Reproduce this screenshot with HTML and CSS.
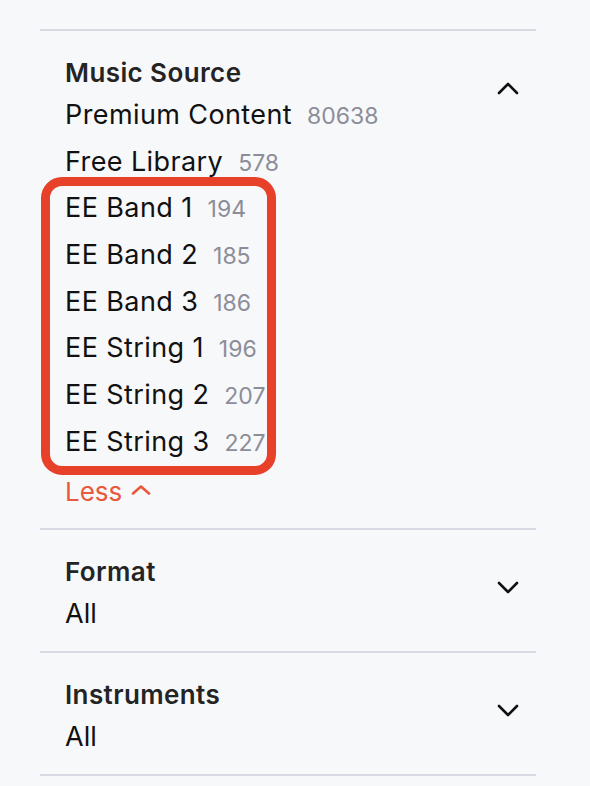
FILE: index.html
```html
<!DOCTYPE html>
<html lang="en">
<head>
<meta charset="utf-8">
<title>Filters</title>
<link rel="stylesheet" href="styles.css">
</head>
<body>
<div class="filters">
  <section class="filter">
    <div class="filter-body">
      <h3 class="filter-title">Music Source</h3>
      <ul class="options">
        <li class="option"><span class="opt-name">Premium Content</span><span class="opt-count">80638</span></li>
        <li class="option"><span class="opt-name">Free Library</span><span class="opt-count">578</span></li>
        <li class="highlight-group">
          <ul class="options">
            <li class="option"><span class="opt-name">EE Band 1</span><span class="opt-count">194</span></li>
            <li class="option"><span class="opt-name">EE Band 2</span><span class="opt-count">185</span></li>
            <li class="option"><span class="opt-name">EE Band 3</span><span class="opt-count">186</span></li>
            <li class="option"><span class="opt-name">EE String 1</span><span class="opt-count">196</span></li>
            <li class="option"><span class="opt-name">EE String 2</span><span class="opt-count">207</span></li>
            <li class="option"><span class="opt-name">EE String 3</span><span class="opt-count">227</span></li>
          </ul>
          <span class="highlight-ring" aria-hidden="true"></span>
        </li>
      </ul>
      <div class="less">Less <svg class="less-icon" width="20" height="10" viewBox="0 0 20 10"><polyline points="2,8.5 10,1.5 18,8.5" fill="none" stroke="currentColor" stroke-width="2.6" stroke-linecap="round" stroke-linejoin="round"/></svg></div>
    </div>
    <svg class="chevron" width="22" height="13" viewBox="0 0 22 13"><polyline points="2,11 11,2 20,11" fill="none" stroke="#111" stroke-width="2.6" stroke-linecap="round" stroke-linejoin="round"/></svg>
  </section>
  <section class="filter">
    <div class="filter-body">
      <h3 class="filter-title">Format</h3>
      <div class="filter-value">All</div>
    </div>
    <svg class="chevron" width="22" height="13" viewBox="0 0 22 13"><polyline points="2,2 11,11 20,2" fill="none" stroke="#111" stroke-width="2.6" stroke-linecap="round" stroke-linejoin="round"/></svg>
  </section>
  <section class="filter filter-last">
    <div class="filter-body">
      <h3 class="filter-title">Instruments</h3>
      <div class="filter-value">All</div>
    </div>
    <svg class="chevron" width="22" height="13" viewBox="0 0 22 13"><polyline points="2,2 11,11 20,2" fill="none" stroke="#111" stroke-width="2.6" stroke-linecap="round" stroke-linejoin="round"/></svg>
  </section>
</div>
</body>
</html>
```
FILE: styles.css
```css
html, body {
  margin: 0;
  padding: 0;
  background: #f7f8fa;
}
body {
  font-family: Inter, "Liberation Sans", Arial, sans-serif;
  color: #111;
}
.filters {
  width: 496px;
  margin-left: 40px;
  padding-top: 29px;
}
.filter {
  display: flex;
  justify-content: space-between;
  align-items: flex-start;
  border-top: 2px solid #d9d9e3;
  padding: 27px 17px 13px 25px;
}
.filter-last {
  border-bottom: 2px solid #d9d9e3;
}
.filter-body {
  display: flex;
  flex-direction: column;
}
.filter-title {
  margin: 0;
  font-size: 26px;
  line-height: 30px;
  font-weight: 600;
  letter-spacing: 0.4px;
  color: #242424;
}
.options {
  list-style: none;
  margin: 0;
  padding: 0;
}
.filter-body > .options {
  margin-top: 4px;
}
.option {
  display: flex;
  align-items: baseline;
  gap: 15px;
  height: 46.7px;
  line-height: 46.7px;
}
.opt-name {
  font-size: 27px;
  letter-spacing: 0.4px;
  color: #111;
}
.opt-count {
  font-size: 23px;
  color: #8c8d99;
}
.highlight-group {
  position: relative;
}
.highlight-ring {
  position: absolute;
  left: -24px;
  top: -8px;
  width: 235px;
  bottom: -9px;
  box-sizing: border-box;
  border: 9px solid #e8412a;
  border-radius: 21px;
  pointer-events: none;
}
.less {
  display: flex;
  align-items: center;
  gap: 9px;
  margin-top: 3px;
  height: 46.7px;
  font-size: 26px;
  color: #e9573d;
}
.less-icon {
  margin-top: -4px;
}
.filter-value {
  margin-top: 4px;
  font-size: 27px;
  line-height: 46.7px;
  color: #111;
}
.chevron {
  margin-top: 24px;
}
```
